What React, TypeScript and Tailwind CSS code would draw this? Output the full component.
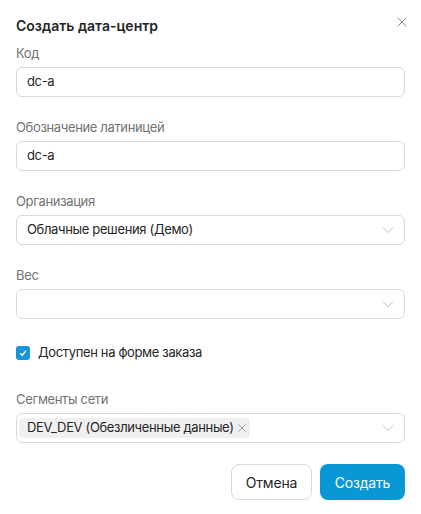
import { useState } from "react";

const Chevron = () => (
  <svg width="12" height="12" viewBox="0 0 12 12" fill="none" className="text-[#bfbfbf]">
    <path d="M1 3.5L6 8.5L11 3.5" stroke="currentColor" strokeWidth="1" />
  </svg>
);

const Cross = ({ size }: { size: number }) => (
  <svg width={size} height={size} viewBox="0 0 10 10" fill="none">
    <path d="M0.5 0.5L9.5 9.5M9.5 0.5L0.5 9.5" stroke="currentColor" strokeWidth="1" />
  </svg>
);

const Label = ({ text, className = "" }: { text: string; className?: string }) => (
  <div className={`text-[13px] tracking-[-0.35px] leading-5 text-[#737373] mb-1 ${className}`}>{text}</div>
);

const boxClass =
  "h-[30px] w-full rounded-[6px] border border-[#d9d9d9] bg-white px-[10px] flex items-center text-[13px] tracking-[-0.35px] text-[#262626]";

export default function App() {
  const [available, setAvailable] = useState(true);

  return (
    <div
      className="w-[421px] h-[514px] bg-white px-4 pt-[15px]"
      style={{ fontFamily: "Inter, 'Noto Sans', sans-serif" }}
    >
      <div className="flex items-center justify-between h-5">
        <h1 className="text-[14px] font-semibold text-[#262626]">Создать дата-центр</h1>
        <button className="text-[#8c8c8c] -mr-[2px] -mt-[6px]">
          <Cross size={10} />
        </button>
      </div>

      <Label text="Код" className="mt-[8px]" />
      <div className={boxClass}>dc-a</div>

      <Label text="Обозначение латиницей" className="mt-5" />
      <div className={boxClass}>dc-a</div>

      <Label text="Организация" className="mt-5" />
      <div className={`${boxClass} justify-between`}>
        <span>Облачные решения (Демо)</span>
        <Chevron />
      </div>

      <Label text="Вес" className="mt-5" />
      <div className={`${boxClass} justify-end`}>
        <Chevron />
      </div>

      <label className="mt-[24px] flex items-center gap-2 h-5 cursor-pointer">
        <span
          onClick={() => setAvailable(!available)}
          className={`w-[14px] h-[14px] rounded-[3px] flex items-center justify-center ${
            available ? "bg-[#1a93d8]" : "border border-[#d9d9d9]"
          }`}
        >
          {available && (
            <svg width="10" height="10" viewBox="0 0 10 10" fill="none">
              <path d="M2 5.2L4.2 7.2L8 2.8" stroke="white" strokeWidth="1.3" />
            </svg>
          )}
        </span>
        <span className="text-[13px] tracking-[-0.35px] text-[#262626]">Доступен на форме заказа</span>
      </label>

      <Label text="Сегменты сети" className="mt-[26px]" />
      <div className="h-[30px] w-full rounded-[6px] border border-[#d9d9d9] bg-white pl-[2px] pr-[10px] flex items-center justify-between">
        <span className="h-[20px] rounded-[4px] bg-[#f0f0f0] pl-2 pr-1 flex items-center gap-1 text-[13px] tracking-[-0.35px] text-[#262626]">
          DEV_DEV (Обезличенные данные)
          <span className="text-[#8c8c8c]">
            <Cross size={8} />
          </span>
        </span>
        <Chevron />
      </div>

      <div className="mt-[21px] flex justify-end gap-2">
        <button className="h-9 w-[81px] rounded-[8px] border border-[#d9d9d9] bg-white text-[14px] tracking-[-0.2px] text-[#262626]">
          Отмена
        </button>
        <button className="h-9 w-[85px] rounded-[8px] bg-[#0a97d6] text-[14px] tracking-[-0.2px] text-white">
          Создать
        </button>
      </div>
    </div>
  );
}
